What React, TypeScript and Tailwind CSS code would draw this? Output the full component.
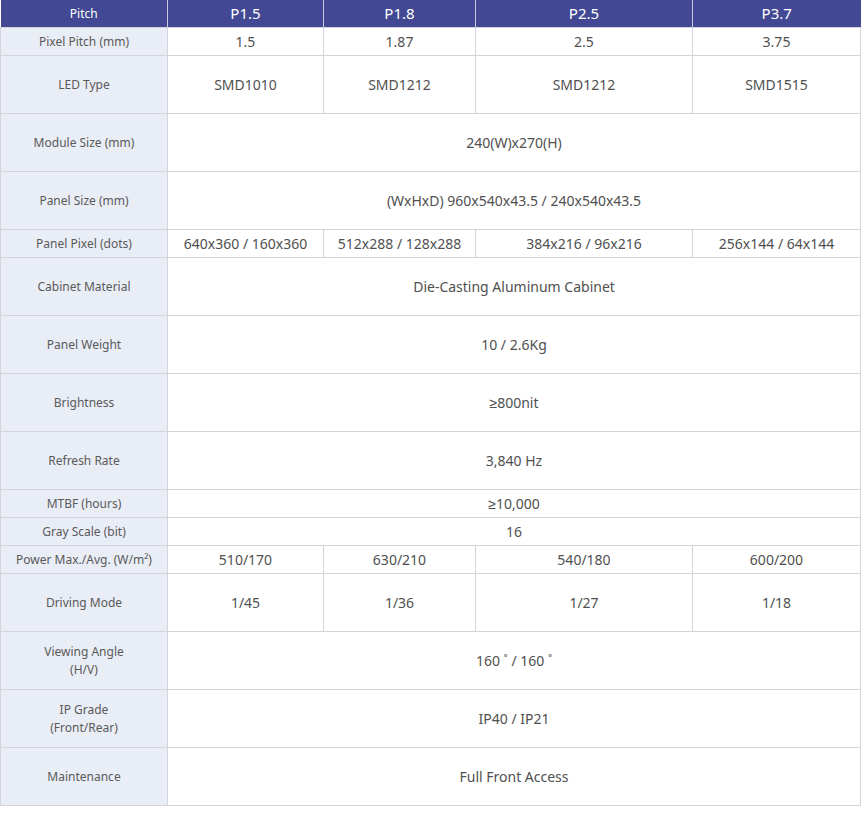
const FONT = "font-['Noto_Sans','Liberation_Sans',sans-serif]";

type Row = {
  label: string[];
  values: string[];
  tall?: boolean;
};

const rows: Row[] = [
  { label: ['Pixel Pitch (mm)'], values: ['1.5', '1.87', '2.5', '3.75'] },
  { label: ['LED Type'], values: ['SMD1010', 'SMD1212', 'SMD1212', 'SMD1515'], tall: true },
  { label: ['Module Size (mm)'], values: ['240(W)x270(H)'], tall: true },
  { label: ['Panel Size (mm)'], values: ['(WxHxD) 960x540x43.5 / 240x540x43.5'], tall: true },
  {
    label: ['Panel Pixel (dots)'],
    values: ['640x360 / 160x360', '512x288 / 128x288', '384x216 / 96x216', '256x144 / 64x144'],
  },
  { label: ['Cabinet Material'], values: ['Die-Casting Aluminum Cabinet'], tall: true },
  { label: ['Panel Weight'], values: ['10 / 2.6Kg'], tall: true },
  { label: ['Brightness'], values: ['≥800nit'], tall: true },
  { label: ['Refresh Rate'], values: ['3,840 Hz'], tall: true },
  { label: ['MTBF (hours)'], values: ['≥10,000'] },
  { label: ['Gray Scale (bit)'], values: ['16'] },
  { label: ['Power Max./Avg. (W/m²)'], values: ['510/170', '630/210', '540/180', '600/200'] },
  { label: ['Driving Mode'], values: ['1/45', '1/36', '1/27', '1/18'], tall: true },
  { label: ['Viewing Angle', '(H/V)'], values: ['160 ˚ / 160 ˚'], tall: true },
  { label: ['IP Grade', '(Front/Rear)'], values: ['IP40 / IP21'], tall: true },
  { label: ['Maintenance'], values: ['Full Front Access'], tall: true },
];

const headers = ['P1.5', 'P1.8', 'P2.5', 'P3.7'];

export default function App() {
  return (
    <div className={`w-[868px] h-[815px] bg-white ${FONT}`}>
      <table className="table-fixed border-collapse w-[860px]">
        <colgroup>
          <col className="w-[167px]" />
          <col className="w-[156px]" />
          <col className="w-[152px]" />
          <col className="w-[217px]" />
          <col className="w-[168px]" />
        </colgroup>
        <thead>
          <tr className="h-[27px] bg-[#424893] text-white">
            <th className="text-[12px] font-normal border-r border-[#c9cbe3] p-0 pt-[2px]">Pitch</th>
            {headers.map((h, i) => (
              <th
                key={h}
                className={
                  'text-[15px] font-normal p-0 ' +
                  (i < headers.length - 1 ? 'border-r border-[#c9cbe3]' : '')
                }
              >
                {h}
              </th>
            ))}
          </tr>
        </thead>
        <tbody>
          {rows.map((r) => (
            <tr key={r.label.join(' ')} className={r.tall ? 'h-[58px]' : 'h-[28px]'}>
              <td className="bg-[#e9edf6] border border-[#d2d4d9] text-center text-[12px] leading-[18px] text-[#5a5a5a] p-0 pt-[2px]">
                {r.label.map((l) => (
                  <div key={l}>{l}</div>
                ))}
              </td>
              {r.values.map((v) => (
                <td
                  key={v + r.label[0]}
                  colSpan={r.values.length === 1 ? 4 : 1}
                  className="border border-[#d2d4d9] text-center text-[14px] text-[#505050] p-0"
                >
                  {v}
                </td>
              ))}
            </tr>
          ))}
        </tbody>
      </table>
    </div>
  );
}
